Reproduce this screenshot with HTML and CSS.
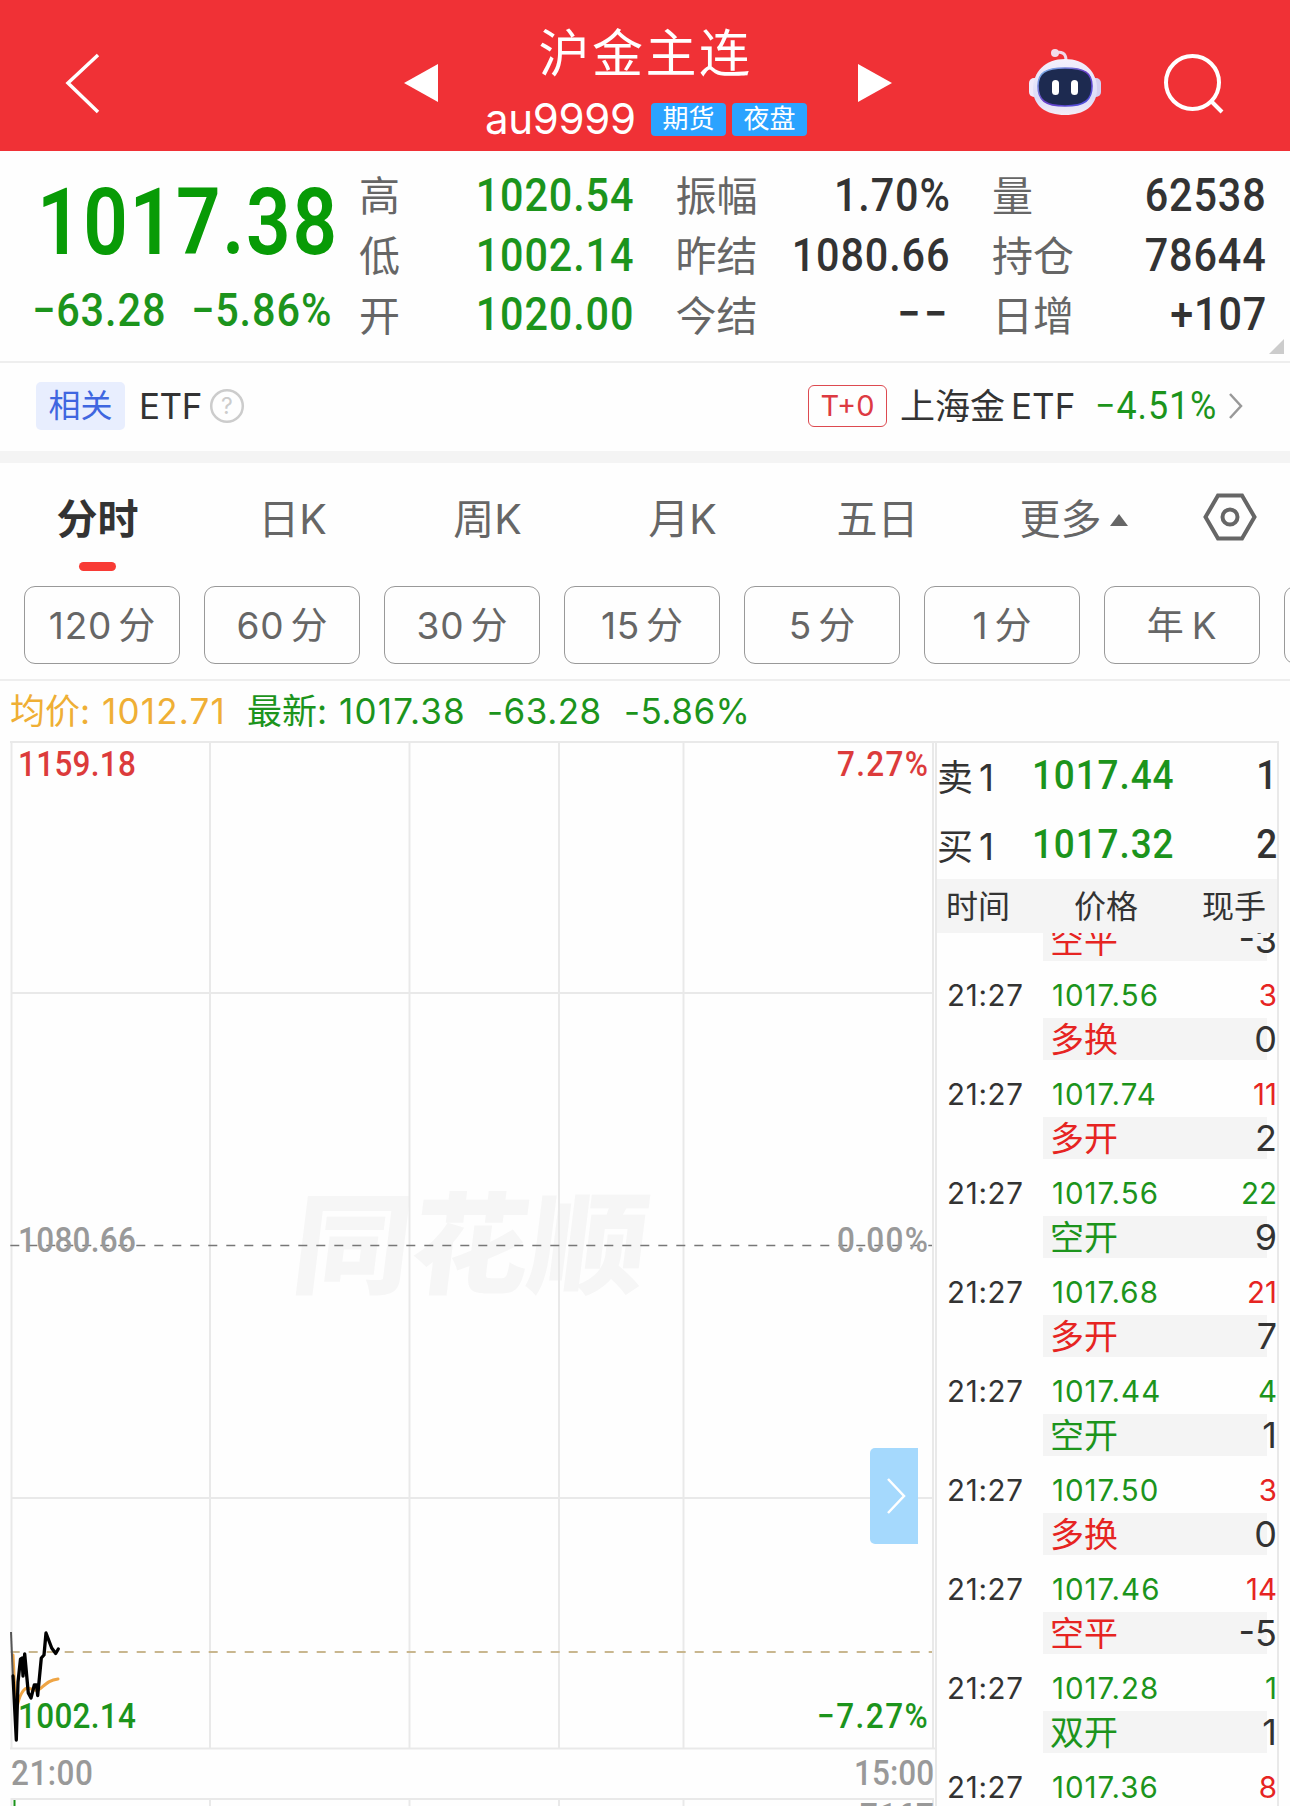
FILE: index.html
```html
<!DOCTYPE html>
<html lang="zh-CN">

<head>
    <meta charset="utf-8">
    <meta name="viewport" content="width=device-width, initial-scale=1.0">
    <title>沪金主连 au9999</title>
    <link rel="stylesheet" href="styles.css">
</head>

<body>
    <header>
        <svg class="back" viewBox="0 0 40 66"><path d="M35 5 L5 33 L35 62" /></svg>
        <svg class="arrow" viewBox="0 0 34 38"><path d="M0 19 L34 0 V38 Z" /></svg>
        <div class="title">
            <h1>沪金主连</h1>
            <div class="code"><span>au9999</span><b>期货</b><b>夜盘</b></div>
        </div>
        <svg class="arrow" viewBox="0 0 34 38"><path d="M34 19 L0 0 V38 Z" /></svg>
        <svg class="robot" viewBox="0 0 74 70">
            <defs>
                <linearGradient id="shell" x1="0" y1="0" x2="0" y2="1">
                    <stop offset="0" stop-color="#f4f0fc" />
                    <stop offset="0.7" stop-color="#dcdcf8" />
                    <stop offset="1" stop-color="#f4edf6" />
                </linearGradient>
                <linearGradient id="rim" x1="0" y1="0" x2="1" y2="1">
                    <stop offset="0" stop-color="#7fc4ee" />
                    <stop offset="0.5" stop-color="#6a3fc8" />
                    <stop offset="1" stop-color="#4c55e0" />
                </linearGradient>
            </defs>
            <path d="M27 7 C33 5 38 7 38 14" fill="none" stroke="#f0d9ea" stroke-width="3" />
            <circle cx="27" cy="7" r="4" fill="#f2dcec" />
            <rect x="1" y="32" width="12" height="19" rx="5" fill="#efeafb" />
            <rect x="61" y="32" width="12" height="19" rx="5" fill="#d3d0f2" />
            <path d="M37 13 C57 13 69 26 69 43 C69 60 56 69 37 69 C18 69 5 60 5 43 C5 26 17 13 37 13 Z" fill="url(#shell)" />
            <path d="M37 22 C57 22 64 27 64 40 C64 54 57 60 37 60 C17 60 10 54 10 40 C10 27 17 22 37 22 Z" fill="#1d2a50" stroke="url(#rim)" stroke-width="1.6" />
            <rect x="24" y="34" width="7" height="15" rx="3.5" fill="#fff" />
            <rect x="43" y="34" width="7" height="15" rx="3.5" fill="#fff" />
        </svg>
        <svg class="search" viewBox="0 0 62 62"><circle cx="29.5" cy="29.5" r="26.5" /><path d="M48 48 L59 59" /></svg>
    </header>

    <section class="quote">
        <div class="last">
            <div class="price din">1017.38</div>
            <div class="change"><span class="din">−63.28</span><span class="din">−5.86%</span></div>
        </div>
        <ul class="stats">
            <li><span>高</span><b class="din green">1020.54</b></li>
            <li><span>振幅</span><b class="din">1.70%</b></li>
            <li><span>量</span><b class="din">62538</b></li>
            <li><span>低</span><b class="din green">1002.14</b></li>
            <li><span>昨结</span><b class="din">1080.66</b></li>
            <li><span>持仓</span><b class="din">78644</b></li>
            <li><span>开</span><b class="din green">1020.00</b></li>
            <li><span>今结</span><b class="din dashes">−−</b></li>
            <li><span>日增</span><b class="din">+107</b></li>
        </ul>
        <i class="corner"></i>
    </section>

    <section class="related">
        <span class="tag">相关</span>
        <span class="etf">ETF</span>
        <svg class="help" viewBox="0 0 36 36"><circle cx="18" cy="18" r="15.8" /><text x="18" y="26">?</text></svg>
        <span class="t0">T+0</span>
        <span class="fund">上海金<em>ETF</em></span>
        <span class="fundchange din">−4.51%</span>
        <svg class="more" viewBox="0 0 16 28"><path d="M2 2 L13 14 L2 26" /></svg>
    </section>

    <nav>
        <span class="tab valgt">分时</span>
        <span class="tab">日K</span>
        <span class="tab">周K</span>
        <span class="tab">月K</span>
        <span class="tab">五日</span>
        <span class="tab wide">更多<i class="up"></i></span>
        <svg class="settings" viewBox="0 0 54 48"><path d="M15 2.5 H39 L51.5 24 L39 45.5 H15 L2.5 24 Z" /><circle cx="27" cy="24" r="7.5" /></svg>
    </nav>

    <div class="periods">
        <button>120<i>分</i></button>
        <button>60<i>分</i></button>
        <button>30<i>分</i></button>
        <button>15<i>分</i></button>
        <button>5<i>分</i></button>
        <button>1<i>分</i></button>
        <button><i class="year">年</i>K</button>
        <button></button>
    </div>

    <div class="legend">
        <span class="avg"><i>均价:</i>1012.71</span>
        <span class="now"><i>最新:</i>1017.38</span>
        <span class="diff">-63.28</span>
        <span class="pct">-5.86%</span>
    </div>

    <main>
        <div class="chart">
            <svg viewBox="0 741 936 1065">
                <text class="watermark" transform="translate(289 1285) skewX(-7)" textLength="354" lengthAdjust="spacingAndGlyphs">同花顺</text>
                <!-- grid -->
                <g class="grid">
                    <path d="M11.5 742 V1749 M933 742 V1749 M10 742 H936 M10 1748.5 H936" />
                    <path d="M210 742 V1748 M409.500 742 V1748 M559 742 V1748 M683.500 742 V1748 M11 993 H933 M11 1498 H933" />
                    <path d="M11.5 1806 V1799 H933 V1806 M210 1799 V1806 M409.500 1799 V1806 M559 1799 V1806 M683.500 1799 V1806" />
                </g>
                <path class="middle" d="M10.300 1245.500 H932" />
                <path class="current" d="M10.700 1652 H932" />
                <!-- price lines -->
                <path class="avgline" d="M13 1655 L16 1713 C18 1700 21 1690 27 1688 C32 1688 35 1693 41 1688 C47 1683 50 1680 58 1679" />
                <path class="opening" d="M11 1632 L13 1680" />
                <path class="priceline" d="M13 1676 L16.300 1740 L18 1682 L20.500 1659 L22 1658 L23 1676 L24.700 1654 L28.300 1693 L31 1698 L34.300 1685 L36.500 1685 L37.700 1695.500 L41.300 1658 L44 1655 L46 1633 L51.700 1648 L55.700 1653.500 L58.300 1649" />
                <path d="M14.500 1800 V1806" stroke="#1c941c" stroke-width="2" />
                <g class="scale">
                    <text class="r" transform="translate(18 776) scale(0.9 1)" textLength="131">1159.18</text>
                    <text class="r" transform="translate(837 776) scale(0.9 1)" textLength="101">7.27%</text>
                    <text class="g" transform="translate(18 1252) scale(0.9 1)" textLength="131">1080.66</text>
                    <text class="g" transform="translate(837 1252) scale(0.9 1)" textLength="101">0.00%</text>
                    <text class="n" transform="translate(18 1728) scale(0.9 1)" textLength="131">1002.14</text>
                    <text class="n" transform="translate(817 1728) scale(0.9 1)" textLength="123">−7.27%</text>
                    <text class="g" transform="translate(11 1785) scale(0.9 1)" textLength="91">21:00</text>
                    <text class="g" transform="translate(854 1785) scale(0.9 1)" textLength="89">15:00</text>
                    <text class="g" transform="translate(860 1828) scale(0.9 1)" textLength="82">7167</text>
                </g>
            </svg>
            <button class="fold"><svg viewBox="0 0 20 38"><path d="M2 2 L18 19 L2 36" /></svg></button>
        </div>

        <aside>
            <div class="order"><span>卖<em>1</em></span><b class="din">1017.44</b><b class="din qty">1</b></div>
            <div class="order"><span>买<em>1</em></span><b class="din">1017.32</b><b class="din qty">2</b></div>
            <div class="thead"><span>时间</span><span>价格</span><span>现手</span></div>
            <div class="ticks">
                <div class="kind first red"><span>空平</span><em>-3</em></div>
                <div class="tick"><time>21:27</time><span>1017.56</span><em class="red">3</em></div>
                <div class="kind red"><span>多换</span><em>0</em></div>
                <div class="tick"><time>21:27</time><span>1017.74</span><em class="red">11</em></div>
                <div class="kind red"><span>多开</span><em>2</em></div>
                <div class="tick"><time>21:27</time><span>1017.56</span><em class="green">22</em></div>
                <div class="kind green"><span>空开</span><em>9</em></div>
                <div class="tick"><time>21:27</time><span>1017.68</span><em class="red">21</em></div>
                <div class="kind red"><span>多开</span><em>7</em></div>
                <div class="tick"><time>21:27</time><span>1017.44</span><em class="green">4</em></div>
                <div class="kind green"><span>空开</span><em>1</em></div>
                <div class="tick"><time>21:27</time><span>1017.50</span><em class="red">3</em></div>
                <div class="kind red"><span>多换</span><em>0</em></div>
                <div class="tick"><time>21:27</time><span>1017.46</span><em class="red">14</em></div>
                <div class="kind red"><span>空平</span><em>-5</em></div>
                <div class="tick"><time>21:27</time><span>1017.28</span><em class="green">1</em></div>
                <div class="kind green"><span>双开</span><em>1</em></div>
                <div class="tick"><time>21:27</time><span>1017.36</span><em class="red">8</em></div>
            </div>
        </aside>
    </main>
</body>

</html>
```
FILE: styles.css
```css
* {
    box-sizing: border-box;
}

body {
    margin: 0;
    width: 1290px;
    height: 1806px;
    overflow: hidden;
    background-color: #fefefe;
    color: #333;
    font-family: Inter, "Noto Sans CJK SC", sans-serif;
}

i,
em {
    font-style: normal;
}

svg {
    display: block;
    flex: none;
}

/* narrow figures */
.din {
    display: inline-block;
    font-family: Roboto, sans-serif;
    font-weight: 500;
    letter-spacing: 1px;
    transform: scaleX(0.88);
    transform-origin: right center;
    white-space: nowrap;
}

.green {
    color: #1c941c;
}

.red {
    color: #e62422;
}

/* ------- header -----------*/
header {
    display: flex;
    align-items: flex-start;
    height: 151px;
    background-color: #f03136;
    color: #fff;
}

.back {
    width: 40px;
    height: 66px;
    margin: 50px 0 0 63px;
    fill: none;
    stroke: #fff;
    stroke-width: 3.5;
}

.arrow {
    width: 34px;
    height: 38px;
    margin-top: 64px;
    fill: #fff;
}

.back + .arrow {
    margin-left: 301px;
}

.title {
    width: 420px;
}

h1 {
    margin: 23px 0 0;
    padding-right: 5px;
    font-size: 51px;
    line-height: 62px;
    font-weight: 400;
    letter-spacing: 2.500px;
    text-align: center;
}

.code {
    display: flex;
    align-items: center;
    height: 42px;
    margin: 13px 0 0 47px;
}

.code span {
    width: 166px;
    font-size: 42px;
    line-height: 42px;
    letter-spacing: -0.300px;
}

.code b {
    width: 75px;
    height: 33px;
    margin-right: 6px;
    border-radius: 4px;
    background-color: #2ba3ff;
    font-size: 26px;
    font-weight: 400;
    line-height: 32px;
    text-align: center;
}

.robot {
    width: 74px;
    height: 70px;
    margin: 46px 0 0 136px;
}

.search {
    width: 62px;
    height: 62px;
    margin: 53px 0 0 61px;
    fill: none;
    stroke: #fff;
    stroke-width: 4;
}

/* ------- quote -----------*/
.quote {
    position: relative;
    display: flex;
    height: 212px;
    border-bottom: 2px solid #eee;
}

.last {
    width: 359px;
    color: #089b06;
}

.price {
    margin: 17px 0 0 37px;
    font-size: 93px;
    font-weight: 600;
    line-height: 110px;
    letter-spacing: 2px;
    transform: scaleX(0.84);
    transform-origin: left center;
}

.change {
    display: flex;
    margin: 5px 0 0 32px;
    font-size: 46px;
    line-height: 54px;
    color: #1c941c;
}

.change .din {
    width: 159px;
    transform: scaleX(0.9);
    transform-origin: left center;
}

.stats {
    display: grid;
    grid-template-columns: 275px 275px 275px;
    grid-auto-rows: 59.700px;
    column-gap: 41.500px;
    margin: 14px 0 0;
    padding: 0;
    list-style: none;
}

.stats li {
    display: flex;
    justify-content: space-between;
    align-items: center;
    line-height: 60px;
}

.stats span {
    padding-top: 3px;
    color: #666;
    font-size: 41px;
}

.stats .din {
    font-size: 47px;
}

.stats .dashes {
    letter-spacing: 4px;
}

.corner {
    position: absolute;
    right: 6px;
    bottom: 7px;
    border-left: 15px solid transparent;
    border-bottom: 15px solid #ccc;
}

/* ------- related ETF -----------*/
.related {
    display: flex;
    align-items: center;
    height: 100px;
    padding: 0 46px 2px 36px;
    border-bottom: 12px solid #f4f4f4;
}

.tag {
    width: 89px;
    height: 48px;
    border-radius: 5px;
    background-color: #e8eefe;
    color: #3f66e0;
    font-size: 32px;
    line-height: 47px;
    text-align: center;
}

.etf {
    width: 70px;
    margin-left: 14px;
    font-size: 35px;
    letter-spacing: -0.500px;
}

.help {
    width: 36px;
    height: 36px;
    fill: none;
    stroke: #ccc;
    stroke-width: 2.500;
}

.help text {
    fill: #ccc;
    stroke: none;
    font-size: 23px;
    text-anchor: middle;
}

.t0 {
    width: 79px;
    height: 42px;
    margin-left: auto;
    border: 1.500px solid #dd4a50;
    border-radius: 6px;
    color: #dd3a42;
    font-size: 29px;
    line-height: 40px;
    text-align: center;
}

.fund {
    width: 195px;
    margin-left: 13px;
    font-size: 35px;
    line-height: 52px;
}

.fund em {
    margin-left: 6px;
}

.fundchange {
    width: 122px;
    color: #1c941c;
    font-size: 39px;
    font-weight: 450;
    transform: scaleX(0.92);
    transform-origin: left center;
}

.more {
    width: 16px;
    height: 28px;
    margin-left: 11px;
    fill: none;
    stroke: #999;
    stroke-width: 2.500;
}

/* ------- tabs -----------*/
nav {
    display: flex;
    height: 123px;
    color: #666;
    font-size: 41px;
    line-height: 112px;
}

.tab {
    width: 195px;
    text-align: center;
}

.tab.valgt {
    display: flex;
    flex-direction: column;
    align-items: center;
    color: #333;
    font-weight: 700;
}

.tab.valgt::after {
    content: "";
    width: 37px;
    height: 9px;
    margin-top: -13px;
    border-radius: 4.500px;
    background-color: #f83b35;
}

.tab.wide {
    width: 195px;
    padding-left: 2px;
}

.up {
    display: inline-block;
    margin-left: 8px;
    border: 9px solid transparent;
    border-top: 0;
    border-bottom: 12px solid #666;
    vertical-align: 8px;
}

.settings {
    width: 54px;
    height: 48px;
    margin: 30px 0 0 33px;
    fill: none;
    stroke: #666;
    stroke-width: 4;
}

.periods {
    display: flex;
    gap: 24px;
    height: 95px;
    padding-left: 24px;
    border-bottom: 2px solid #eee;
    overflow: hidden;
}

.periods button {
    flex: none;
    width: 156px;
    height: 78px;
    padding: 0;
    border: 1.500px solid #999;
    border-radius: 11px;
    background-color: #fefefe;
    color: #666;
    font-family: inherit;
    font-size: 37px;
    line-height: 77px;
    letter-spacing: 0.800px;
}

.periods i {
    margin-left: 6px;
    letter-spacing: 0;
}

.periods .year {
    margin: 0 8px 0 0;
}

.legend {
    display: flex;
    height: 60px;
    padding-left: 10px;
    color: #1c941c;
    font-size: 35px;
    line-height: 61px;
    letter-spacing: 0.500px;
    white-space: nowrap;
}

.legend i {
    margin-right: 12px;
    letter-spacing: 0;
}

.legend .avg {
    width: 237px;
    color: #efaf35;
    letter-spacing: 1.200px;
}

.legend .now {
    width: 240px;
    letter-spacing: 1.200px;
}

.legend .diff {
    width: 137px;
}

/* ------- chart -----------*/
main {
    display: flex;
    height: 1065px;
}

.chart {
    position: relative;
    width: 935px;
}

.chart > svg {
    width: 936px;
    height: 1065px;
}

.chart path {
    fill: none;
}

.watermark {
    fill: #f6f6f6;
    font-family: "Noto Sans CJK SC", sans-serif;
    font-size: 110px;
    font-weight: 900;
}

.grid {
    stroke: #e9e9e9;
    stroke-width: 2;
}

.middle {
    stroke: #777;
    stroke-width: 1.500;
    stroke-dasharray: 9 9;
}

.current {
    stroke: #c9b78f;
    stroke-width: 1.800;
    stroke-dasharray: 9 9;
}

.avgline {
    stroke: #efa545;
    stroke-width: 3;
    stroke-linecap: round;
}

.priceline {
    stroke: #000;
    stroke-width: 3.300;
    stroke-linecap: round;
    stroke-linejoin: round;
}

.opening {
    stroke: #555;
    stroke-width: 2;
}

.scale {
    font-family: Roboto, sans-serif;
    font-size: 35px;
    font-weight: 500;
}

.scale .r {
    fill: #dc3b3b;
}

.scale .g {
    fill: #999;
}

.scale .n {
    fill: #1c941c;
}

.fold {
    position: absolute;
    left: 870px;
    top: 707px;
    display: flex;
    align-items: center;
    width: 48px;
    height: 96px;
    padding: 0 0 0 16px;
    border: 0;
    border-radius: 5px 0 0 5px;
    background-color: #a5d9fd;
}

.fold svg {
    width: 20px;
    height: 38px;
    stroke: #fff;
    stroke-width: 2.500;
}

/* ------- orders -----------*/
aside {
    width: 344px;
    height: 1065px;
    border: 2px solid #e9e9e9;
    border-width: 2px 2px 0;
    overflow: hidden;
}

.order {
    display: flex;
    align-items: center;
    height: 69px;
    padding-bottom: 5px;
    white-space: nowrap;
}

.order span {
    width: 95px;
    font-size: 36px;
}

.order em {
    margin-left: 6px;
    font-size: 37px;
}

.order .din {
    color: #1c941c;
    font-size: 41px;
    transform: scaleX(0.9);
    transform-origin: left center;
}

.order .qty {
    margin-left: auto;
    color: #333;
    letter-spacing: 0;
    transform-origin: right center;
}

.thead {
    display: flex;
    justify-content: space-between;
    height: 54px;
    margin-top: -2px;
    padding: 0 11px 0 9px;
    background-color: #f4f4f4;
    font-size: 32px;
    line-height: 55px;
}

.tick {
    display: flex;
    height: 57px;
    padding: 11px 0 0 10px;
    font-size: 29.500px;
    line-height: 46px;
}

.tick time {
    width: 105px;
    letter-spacing: 0.700px;
}

.tick span {
    color: #1c941c;
    letter-spacing: 1px;
}

.tick em {
    margin-left: auto;
}

.kind {
    display: flex;
    justify-content: space-between;
    height: 42px;
    margin: 0 10px 0 106px;
    padding-left: 7px;
    background-color: #f4f4f4;
    font-size: 34px;
    line-height: 44px;
}

.kind em {
    margin-right: -10px;
    color: #333;
    font-size: 36px;
    line-height: 43px;
}

.ticks {
    height: 873px;
    overflow: hidden;
}

.kind.first {
    margin-top: -14px;
}
```
